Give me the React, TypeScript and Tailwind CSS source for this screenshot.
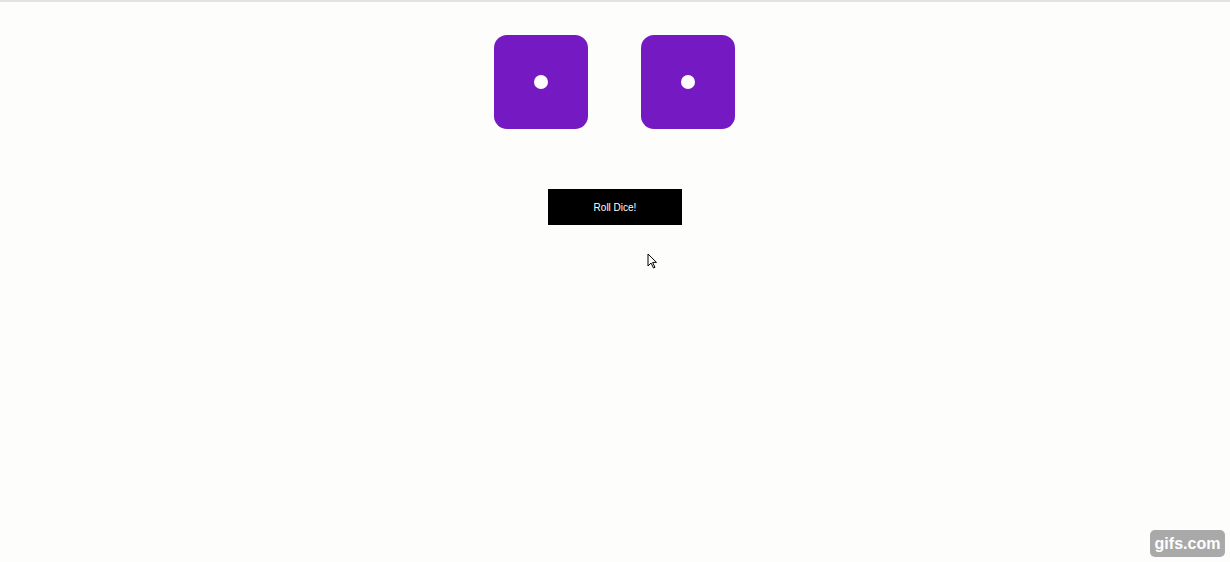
import React from "react";

function Die() {
  return (
    <div className="w-[94px] h-[94px] rounded-[13px] bg-[#7519c2] flex items-center justify-center">
      <div className="w-[14px] h-[14px] rounded-full bg-white" />
    </div>
  );
}

export default function App() {
  return (
    <div className="relative w-[1230px] h-[562px] bg-[#fdfdfc] overflow-hidden" style={{ fontFamily: '"Liberation Sans", Arial, sans-serif' }}>
      <div className="h-[2px] bg-[#e2e4e3]" />
      <div className="flex flex-col items-center pt-[33px]">
        <div className="flex gap-[53px] pr-[1px]">
          <Die />
          <Die />
        </div>
        <button className="mt-[60px] w-[134px] h-[36px] bg-black text-white text-[10px] flex items-center justify-center">
          Roll Dice!
        </button>
      </div>
      <svg className="absolute left-[647px] top-[253px]" width="11" height="16" viewBox="0 0 11 16">
        <path d="M1 1 L1 13 L4 10 L6.5 15 L8 14.3 L5.6 9.4 L9.5 9.4 Z" fill="white" stroke="black" strokeWidth="1" strokeLinejoin="round" />
      </svg>
      <div className="absolute right-[5px] bottom-[5px] w-[75px] h-[27px] rounded-[5px] bg-[#a9a9a9] text-white font-bold text-[16px] flex items-center justify-center leading-none">
        gifs.com
      </div>
    </div>
  );
}
